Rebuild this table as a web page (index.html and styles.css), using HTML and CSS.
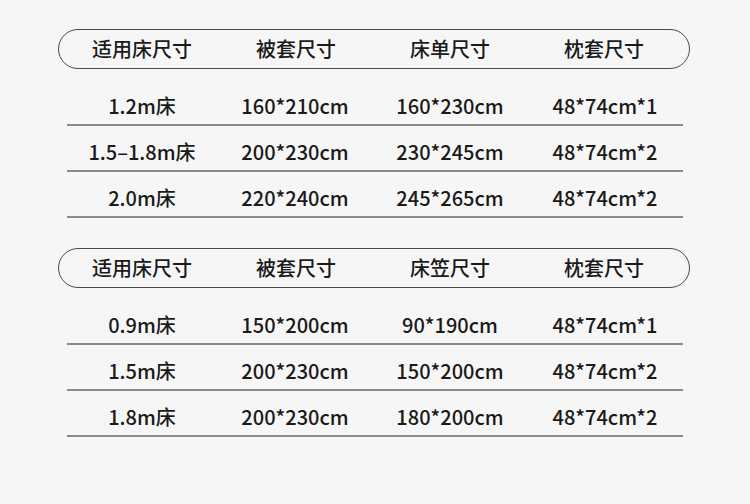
FILE: index.html
```html
<!DOCTYPE html>
<html lang="zh">
<head>
<meta charset="utf-8">
<link rel="stylesheet" href="styles.css">
</head>
<body>
<div class="page">
  <section class="table first">
    <div class="head">
      <span>适用床尺寸</span><span>被套尺寸</span><span>床单尺寸</span><span>枕套尺寸</span>
    </div>
    <div class="row"><span>1.2m床</span><span>160*210cm</span><span>160*230cm</span><span>48*74cm*1</span></div>
    <div class="row"><span>1.5–1.8m床</span><span>200*230cm</span><span>230*245cm</span><span>48*74cm*2</span></div>
    <div class="row"><span>2.0m床</span><span>220*240cm</span><span>245*265cm</span><span>48*74cm*2</span></div>
  </section>
  <section class="table second">
    <div class="head">
      <span>适用床尺寸</span><span>被套尺寸</span><span>床笠尺寸</span><span>枕套尺寸</span>
    </div>
    <div class="row"><span>0.9m床</span><span>150*200cm</span><span>90*190cm</span><span>48*74cm*1</span></div>
    <div class="row"><span>1.5m床</span><span>200*230cm</span><span>150*200cm</span><span>48*74cm*2</span></div>
    <div class="row"><span>1.8m床</span><span>200*230cm</span><span>180*200cm</span><span>48*74cm*2</span></div>
  </section>
</div>
</body>
</html>
```
FILE: styles.css
```css
html, body {
  margin: 0;
  padding: 0;
  background: #f6f6f6;
}
.page {
  width: 750px;
  height: 504px;
  padding-top: 29px;
  box-sizing: border-box;
  font-family: "Noto Sans CJK SC", "Noto Sans", sans-serif;
  color: #1a1a1a;
  font-variant-numeric: proportional-nums;
}
.table {
  margin-left: 58px;
  width: 632px;
}
.second {
  margin-top: 30px;
}
.head {
  height: 40px;
  box-sizing: border-box;
  border: 1.5px solid #4a4a4a;
  border-radius: 20px;
  display: grid;
  grid-template-columns: repeat(4, 154px);
  padding-left: 6px;
  align-items: center;
  font-size: 20px;
  font-weight: 500;
  line-height: 1;
  margin-bottom: 11px;
}
.head span, .row span {
  text-align: center;
}
.row {
  width: 616px;
  height: 46px;
  box-sizing: border-box;
  border-bottom: 2px solid #8a8a8a;
  display: grid;
  grid-template-columns: 150px 156px 154px 156px;
  margin-left: 9px;
  padding-top: 9px;
  font-size: 20px;
  font-weight: 500;
  line-height: 34px;
}
```
